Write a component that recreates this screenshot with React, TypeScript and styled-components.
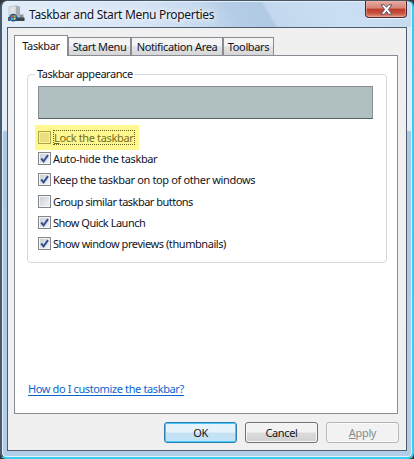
import React from 'react';
import styled, { createGlobalStyle } from 'styled-components';

const Global = createGlobalStyle`
  * { box-sizing: border-box; }
  body { margin: 0; background: #35383d; font: 11px/14px "Noto Sans", "Open Sans", sans-serif; color: #111424; }
`;

const Window = styled.main`
  width: 414px; height: 459px; padding: 0 5px 6px 5px;
  display: flex; flex-direction: column;
  border: 2px solid #35cdf0; border-top: 1px solid #4a5563; border-left: 2px solid #485a6c;
  border-radius: 7px 7px 6px 6px;
  background:
    linear-gradient(60deg, #e3eefa 0, #d5e4f5 35%, #c4d8ed 50%, #b4cce6 56%, #b1cae4 64.2%, #c3d8ee 65%, #cbdff3 82%, #c4daf0) 0 0 / 100% 26px no-repeat,
    linear-gradient(#dce9f8 0, #e3eefa 129px, #a9c7e7 131px, #b3cde9) padding-box;
  box-shadow: inset 0 0 0 1px #e1f0fb;
`;
const TitleBar = styled.header`
  height: 26px; display: flex; align-items: flex-start; flex: none;
`;
const AppIcon = styled.svg`
  width: 17px; height: 17px; margin: 4px 0 0 1px; flex: none;
`;
const Title = styled.h1`
  margin: 5px 0 0 4px; font-size: 12px; line-height: 17px; font-weight: 400;
  letter-spacing: -0.31px; white-space: nowrap; text-shadow: 0 0 6px #fff, 0 0 4px #fff;
`;
const Close = styled.button`
  margin: 0 0 0 auto; width: 42px; height: 17px; padding: 0; display: grid; place-items: center;
  border: 1px solid #4d2832; border-top: 0; border-radius: 0 0 4px 4px;
  background: linear-gradient(#e6aaa0 0, #d58475 45%, #bc3c2c 50%, #c74f3b 75%, #e19780);
  box-shadow: inset 0 0 0 1px #edb5aa88, 0 1px 0 #eef6fd;
`;
const Client = styled.section`
  flex: 1; border: 1px solid #4e5c6c; background: #f0f0f0;
  padding: 7px 7px 0 6px; display: flex; flex-direction: column;
`;
const Tabs = styled.nav`
  display: flex; align-items: flex-end; height: 21px; flex: none; position: relative; z-index: 1; margin-bottom: -1px;
`;
const Tab = styled.button<{ $w: number; $on?: boolean }>`
  width: ${p => p.$w}px; height: ${p => (p.$on ? 21 : 19)}px; padding: 0; font: inherit; color: inherit;
  white-space: nowrap; letter-spacing: -0.36px;
  border: 1px solid #898c95; ${p => p.$on && 'border-bottom: 0; padding-bottom: 1px;'}
  background: ${p => (p.$on ? '#fff' : 'linear-gradient(#f4f4f4 45%, #e5e5e5 50%, #d6d6d6)')};
`;
const Panel = styled.div`
  height: 359px; background: #fff; border: 1px solid #898c95; width: 384px;
  padding: 11px 10px 0 12px; display: flex; flex-direction: column; align-items: flex-start;
`;
const Group = styled.fieldset`
  margin: 0; width: 360px; height: 196px; min-width: 0; border: 1px solid #d1d9df; border-radius: 4px;
  padding: 0 0 0 7px;
`;
const Legend = styled.legend`
  padding: 0 2px; height: 14px; letter-spacing: -0.45px; white-space: nowrap;
`;
const Preview = styled.div`
  width: 335px; height: 33px; margin: 5px 0 6px 3px; background: #b0bfbf;
  border: 1px solid #858d97; border-bottom-color: #566160;
`;
const Option = styled.label<{ $hot?: boolean }>`
  display: flex; align-items: center; width: fit-content; height: ${p => (p.$hot ? 25 : 21.3)}px;
  padding: 0 4px 0 3px; white-space: nowrap; margin-bottom: ${p => (p.$hot ? -2 : 0)}px;
  background: ${p => (p.$hot ? '#fff78f' : 'none')}; color: ${p => (p.$hot ? '#746d1c' : 'inherit')};
`;
const Box = styled.span<{ $hot?: boolean }>`
  width: 13px; height: 13px; flex: none; display: grid; place-items: center;
  border: 1px solid ${p => (p.$hot ? '#aaa347' : '#81868b')};
  background: ${p => (p.$hot ? '#e9de80' : 'linear-gradient(135deg, #c9cdd4, #f5f6f7)')};
  box-shadow: inset 0 0 0 1px ${p => (p.$hot ? '#fff58d' : '#f5f5f5')};
`;
const Caption = styled.span<{ $track: number; $focus?: boolean }>`
  letter-spacing: ${p => p.$track}px; line-height: 13px;
  padding: ${p => (p.$focus ? '0 1px 0 0' : '0 0 0 1px')};
  border: 1px ${p => (p.$focus ? 'dotted #6b631b' : 'solid transparent')};
  margin-left: ${p => (p.$focus ? 2 : 0)}px;
`;
const Link = styled.a`
  margin: 119px 0 0 1px; color: #0865ce; text-decoration: underline; text-underline-offset: 2px;
  white-space: nowrap; letter-spacing: -0.38px;
`;
const Actions = styled.footer`
  display: flex; justify-content: flex-end; gap: 8px; padding-top: 8px;
`;
const Action = styled.button<{ $kind?: 'primary' | 'off' }>`
  width: 73px; height: 21px; padding: 0; font: inherit; letter-spacing: -0.35px; border-radius: 3px;
  color: ${p => (p.$kind === 'off' ? '#878a8d' : '#101522')};
  border: 1px solid ${p => (p.$kind === 'primary' ? '#347cab' : p.$kind === 'off' ? '#b2b6b9' : '#707070')};
  background: ${p => (p.$kind === 'primary' ? 'linear-gradient(#e7f3fb 48%, #c6e1f3 52%, #c1e4f8)' : p.$kind === 'off' ? '#f2f2f2' : 'linear-gradient(#f2f2f2 48%, #dcdcdc 52%, #d0d0d0)')};
  box-shadow: inset 0 0 0 1px ${p => (p.$kind === 'primary' ? '#44cafa' : '#f8f8f8')};
`;

const options = [
  { label: 'Auto-hide the taskbar', checked: true, track: -0.37 },
  { label: 'Keep the taskbar on top of other windows', checked: true, track: -0.36 },
  { label: 'Group similar taskbar buttons', checked: false, track: -0.52 },
  { label: 'Show Quick Launch', checked: true, track: -0.49 },
  { label: 'Show window previews (thumbnails)', checked: true, track: -0.43 },
];

const Check = () => (
  <svg width="9" height="9" viewBox="0 0 9 9">
    <path d="M1.2 4.5 3.6 7.3 8 1.2" fill="none" stroke="#334f91" strokeWidth="2" />
  </svg>
);

export default function App() {
  return (
    <>
      <Global />
      <Window>
        <TitleBar>
          <AppIcon viewBox="0 0 17 17">
            <path d="M1 2 8 .5v14H1z" fill="#dfe3e4" stroke="#b4bcc2" strokeWidth=".7" />
            <path d="M8 .5l4 1V13H8z" fill="#a9b1b7" />
            <path d="M12 9.5h3.5V13H12z" fill="#89949c" />
            <path d="M8 12.5h8.5V16H7z" fill="#3f464d" />
            <path d="M0 12h2v4H0z" fill="#59636c" />
            <circle cx="5.3" cy="12.6" r="3.9" fill="#175996" />
            <path d="M3 10.2h2v2H2.7z" fill="#e4552e" />
            <path d="M5.5 10.2h2l.3 2H5.5z" fill="#8cc456" />
            <path d="M2.6 12.7H5v2H3z" fill="#52b7ed" />
            <path d="M5.5 12.7h2.3l-.6 2H5.5z" fill="#f8d34c" />
          </AppIcon>
          <Title>Taskbar and Start Menu Properties</Title>
          <Close aria-label="Close">
            <svg width="13" height="11" viewBox="0 0 13 11">
              <path d="M1 .8h3.4l2.1 2.5L8.6.8H12L8.4 5.4l3.7 4.8H8.6L6.5 7.5l-2.1 2.7H.9l3.7-4.8z" fill="#fff" stroke="#555568" strokeWidth="1" />
            </svg>
          </Close>
        </TitleBar>
        <Client>
          <Tabs>
            <Tab $w={54} $on>Taskbar</Tab>
            <Tab $w={63}>Start Menu</Tab>
            <Tab $w={92}>Notification Area</Tab>
            <Tab $w={51}>Toolbars</Tab>
          </Tabs>
          <Panel>
            <Group>
              <Legend>Taskbar appearance</Legend>
              <Preview />
              <Option $hot>
                <Box $hot />
                <Caption $track={-0.35} $focus><u>L</u>ock the taskbar</Caption>
              </Option>
              {options.map(o => (
                <Option key={o.label}>
                  <Box>{o.checked && <Check />}</Box>
                  <Caption $track={o.track}>{o.label}</Caption>
                </Option>
              ))}
            </Group>
            <Link>How do I customize the taskbar?</Link>
          </Panel>
          <Actions>
            <Action $kind="primary">OK</Action>
            <Action>Cancel</Action>
            <Action $kind="off"><u>A</u>pply</Action>
          </Actions>
        </Client>
      </Window>
    </>
  );
}
